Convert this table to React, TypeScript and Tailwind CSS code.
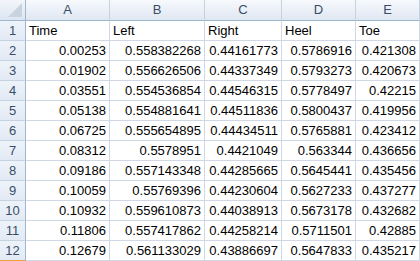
const cols = ["A", "B", "C", "D", "E"];

const rows: string[][] = [
  ["Time", "Left", "Right", "Heel", "Toe"],
  ["0.00253", "0.558382268", "0.44161773", "0.5786916", "0.421308"],
  ["0.01902", "0.556626506", "0.44337349", "0.5793273", "0.420673"],
  ["0.03551", "0.554536854", "0.44546315", "0.5778497", "0.42215"],
  ["0.05138", "0.554881641", "0.44511836", "0.5800437", "0.419956"],
  ["0.06725", "0.555654895", "0.44434511", "0.5765881", "0.423412"],
  ["0.08312", "0.5578951", "0.4421049", "0.563344", "0.436656"],
  ["0.09186", "0.557143348", "0.44285665", "0.5645441", "0.435456"],
  ["0.10059", "0.55769396", "0.44230604", "0.5627233", "0.437277"],
  ["0.10932", "0.559610873", "0.44038913", "0.5673178", "0.432682"],
  ["0.11806", "0.557417862", "0.44258214", "0.5711501", "0.42885"],
  ["0.12679", "0.561133029", "0.43886697", "0.5647833", "0.435217"],
];

function Corner() {
  return (
    <div className="relative h-[21px] border-r border-b border-[#9eb6ce] bg-gradient-to-b from-[#f3f6fb] to-[#dce5f2]">
      <svg className="absolute right-[3px] bottom-[3px]" width="14" height="14" viewBox="0 0 14 14">
        <polygon points="14,0 14,14 0,14" fill="#c9d3e0" />
      </svg>
    </div>
  );
}

export default function App() {
  return (
    <div
      className="h-[261px] w-[420px] overflow-hidden bg-white text-[13px] text-black"
      style={{ fontFamily: '"Liberation Sans", Arial, sans-serif' }}
    >
      <div className="grid grid-cols-[26px_84px_95px_77px_74px_64px]">
        <Corner />
        {cols.map((c) => (
          <div
            key={c}
            className="flex h-[21px] items-center justify-center border-r border-b border-r-[#c5d2e0] border-b-[#9eb6ce] bg-gradient-to-b from-[#f7f9fc] to-[#dfe7f3] text-[#3a4d66]"
          >
            {c}
          </div>
        ))}

        {rows.map((r, i) => (
          <div key={i} className="contents">
            <div
              className={
                "flex h-[20px] items-center justify-center border-r border-b border-r-[#9eb6ce] border-b-[#c5d2e0] bg-gradient-to-b from-[#eef3fa] to-[#e2eaf5] text-[#3a4d66]" +
                (i === rows.length - 1 ? " border-b-[#f2a23c]" : "")
              }
            >
              {i + 1}
            </div>
            {r.map((v, j) => (
              <div
                key={j}
                className={
                  "flex h-[20px] items-center overflow-hidden whitespace-nowrap border-r border-b border-[#d0d7e5] px-[3px] " +
                  (i === 0 ? "justify-start" : "justify-end")
                }
              >
                {v}
              </div>
            ))}
          </div>
        ))}
      </div>
    </div>
  );
}
